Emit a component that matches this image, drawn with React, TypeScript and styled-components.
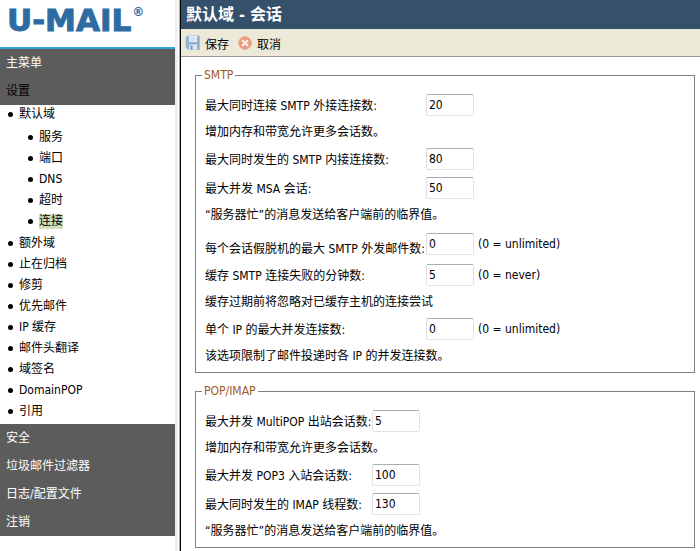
import React from "react";
import styled, { createGlobalStyle } from "styled-components";

const GlobalStyle = createGlobalStyle`
  * { box-sizing: border-box; }
  body {
    margin: 0;
    background: #fff;
    color: #000;
    font: 12px/16px "DejaVu Sans Condensed", "Noto Sans CJK SC", sans-serif;
  }
`;

const Page = styled.div`
  display: flex;
  min-height: 100vh;
`;

const Sidebar = styled.aside`
  flex: none;
  width: 175px;
`;

const Splitter = styled.div`
  flex: none;
  width: 6px;
  background: #f8f8f8;
  border-left: 2px solid #ececec;
  border-right: 1px solid #000;
  box-shadow: inset -1px 0 #b0b0b0;
`;

const Logo = styled.div`
  display: flex;
  align-items: flex-start;
  height: 49px;
  padding: 2px 0 0 7px;
  border-bottom: 2px solid #2fa9cc;
  color: #2d6ba3;
  font: bold 31px/36px "DejaVu Sans", sans-serif;
  -webkit-text-stroke: 1px #2d6ba3;
`;

const Registered = styled.span`
  padding-left: 1px;
  font-size: 12px;
  line-height: 20px;
  -webkit-text-stroke: 0;
`;

const Section = styled.a<{ $current?: boolean }>`
  display: block;
  padding: 0 6px;
  line-height: 28px;
  background: #5c5c5c;
  color: ${(p) => (p.$current ? "#000" : "#fff")};
  text-decoration: none;
`;

const Tree = styled.ul`
  margin: 0;
  padding: 0 0 1px 8px;
  list-style: none;
`;

const Branch = styled(Tree)`
  padding: 2px 0 1px 20px;
`;

const Leaf = styled.div`
  display: flex;
  align-items: center;
  gap: 6px;
  height: 21px;
  padding-bottom: 2px;
  &::before {
    content: "";
    width: 5px;
    height: 5px;
    border-radius: 50%;
    background: #000;
  }
`;

const LeafLink = styled.a<{ $current?: boolean }>`
  line-height: 15px;
  color: #000;
  text-decoration: none;
  background: ${(p) => (p.$current ? "#d0dfb9" : "transparent")};
`;

const Main = styled.main`
  flex: 1;
  min-width: 0;
`;

const Title = styled.h1`
  margin: 0;
  padding: 0 5px;
  background: #34506b;
  color: #fff;
  font-size: 16px;
  line-height: 29px;
`;

const Toolbar = styled.div`
  display: flex;
  gap: 8px;
  height: 28px;
  padding: 0 4px;
  background: #ece9d8;
  border-bottom: 1px solid #a09c9c;
`;

const ToolButton = styled.button`
  display: flex;
  align-items: center;
  gap: 4px;
  padding: 0;
  border: 0;
  background: none;
  color: #000;
  font: inherit;
`;

const ToolLabel = styled.span`
  padding-top: 5px;
`;

const Form = styled.form`
  display: grid;
  gap: 10px;
  padding: 10px 5px 4px 14px;
`;

const Group = styled.fieldset`
  min-width: 0;
  margin: 0;
  padding: 7px 9px 4px;
  border: 1px solid #808080;
`;

const Legend = styled.legend`
  margin-left: -3px;
  padding: 0 2px;
  color: #a0591f;
`;

const Row = styled.div<{ $labelWidth: number; $tall?: boolean }>`
  display: grid;
  grid-template-columns: minmax(${(p) => p.$labelWidth}px, max-content) auto 1fr;
  align-items: center;
  height: ${(p) => (p.$tall ? 33 : 29)}px;
  label {
    padding-top: ${(p) => (p.$tall ? 10 : 2)}px;
    white-space: nowrap;
  }
`;

const Field = styled.input`
  width: 48px;
  height: 22px;
  padding: 1px 2px 0;
  border: 1px solid #e2e3ea;
  border-top-color: #abadb3;
  border-left-color: #dbdfe6;
  border-radius: 2px;
  font: inherit;
`;

const Hint = styled.span`
  padding: 1px 0 0 4px;
`;

const Note = styled.p`
  margin: 0;
  padding-top: 1px;
  line-height: 24px;
`;

const SaveIcon = () => (
  <svg width="16" height="16" viewBox="0 0 16 16" aria-hidden="true">
    <path d="M1 2.5Q1 1 2.5 1H14.5V14.5H3L1 12.5Z" fill="#8fb0d6" stroke="#a5bcd8" />
    <rect x="4" y="1" width="8" height="6" fill="#e9eff6" />
    <path d="M5.5 3H10.500M5.500 5H10.500" stroke="#b4c8de" />
    <rect x="4" y="9.500" width="8" height="5" fill="#dfe7ee" />
    <rect x="5.500" y="10.500" width="2" height="4" fill="#7294bd" />
  </svg>
);

const CancelIcon = () => (
  <svg width="16" height="16" viewBox="0 0 16 16" aria-hidden="true">
    <circle cx="8" cy="8" r="6.5" fill="#e79a7c" stroke="#f0b8a0" />
    <path d="M5 5L11 11M11 5L5 11" stroke="#fbeee6" strokeWidth="2.400" />
  </svg>
);

type Item = {
  id?: string;
  text: string;
  value?: string;
  hint?: string;
  tall?: boolean;
};

const smtp: Item[] = [
  { id: "smtp-out", text: "最大同时连接 SMTP 外接连接数:", value: "20" },
  { text: "增加内存和带宽允许更多会话数。" },
  { id: "smtp-in", text: "最大同时发生的 SMTP 内接连接数:", value: "80" },
  { id: "msa", text: "最大并发 MSA 会话:", value: "50" },
  { text: "“服务器忙”的消息发送给客户端前的临界值。" },
  { id: "spool", text: "每个会话假脱机的最大 SMTP 外发邮件数:", value: "0", hint: "(0 = unlimited)", tall: true },
  { id: "cache", text: "缓存 SMTP 连接失败的分钟数:", value: "5", hint: "(0 = never)" },
  { text: "缓存过期前将忽略对已缓存主机的连接尝试" },
  { id: "per-ip", text: "单个 IP 的最大并发连接数:", value: "0", hint: "(0 = unlimited)" },
  { text: "该选项限制了邮件投递时各 IP 的并发连接数。" },
];

const popImap: Item[] = [
  { id: "multipop", text: "最大并发 MultiPOP 出站会话数:", value: "5" },
  { text: "增加内存和带宽允许更多会话数。" },
  { id: "pop3", text: "最大并发 POP3 入站会话数:", value: "100" },
  { id: "imap", text: "最大同时发生的 IMAP 线程数:", value: "130" },
  { text: "“服务器忙”的消息发送给客户端前的临界值。" },
];

const domainPages = ["服务", "端口", "DNS", "超时", "连接"];
const settings = ["额外域", "止在归档", "修剪", "优先邮件", "IP 缓存", "邮件头翻译", "域签名", "DomainPOP", "引用"];

function Settings({ title, items, labelWidth }: { title: string; items: Item[]; labelWidth: number }) {
  return (
    <Group>
      <Legend>{title}</Legend>
      {items.map((item) =>
        item.id ? (
          <Row key={item.id} $labelWidth={labelWidth} $tall={item.tall}>
            <label htmlFor={item.id}>{item.text}</label>
            <Field id={item.id} defaultValue={item.value} />
            {item.hint && <Hint>{item.hint}</Hint>}
          </Row>
        ) : (
          <Note key={item.text}>{item.text}</Note>
        )
      )}
    </Group>
  );
}

function TreeItem({ text, current }: { text: string; current?: boolean }) {
  return (
    <Leaf>
      <LeafLink href="#" $current={current}>{text}</LeafLink>
    </Leaf>
  );
}

export default function App() {
  return (
    <>
      <GlobalStyle />
      <Page>
        <Sidebar>
          <Logo>
            U-MAIL<Registered>®</Registered>
          </Logo>
          <nav>
            <Section href="#">主菜单</Section>
            <Section href="#" $current>设置</Section>
            <Tree>
              <li>
                <TreeItem text="默认域" />
                <Branch>
                  {domainPages.map((text) => (
                    <li key={text}><TreeItem text={text} current={text === "连接"} /></li>
                  ))}
                </Branch>
              </li>
              {settings.map((text) => (
                <li key={text}><TreeItem text={text} /></li>
              ))}
            </Tree>
            <Section href="#">安全</Section>
            <Section href="#">垃圾邮件过滤器</Section>
            <Section href="#">日志/配置文件</Section>
            <Section href="#">注销</Section>
          </nav>
        </Sidebar>
        <Splitter />
        <Main>
          <Title>默认域 - 会话</Title>
          <Toolbar>
            <ToolButton type="button"><SaveIcon /><ToolLabel>保存</ToolLabel></ToolButton>
            <ToolButton type="button"><CancelIcon /><ToolLabel>取消</ToolLabel></ToolButton>
          </Toolbar>
          <Form>
            <Settings title="SMTP" items={smtp} labelWidth={221} />
            <Settings title="POP/IMAP" items={popImap} labelWidth={167} />
          </Form>
        </Main>
      </Page>
    </>
  );
}
